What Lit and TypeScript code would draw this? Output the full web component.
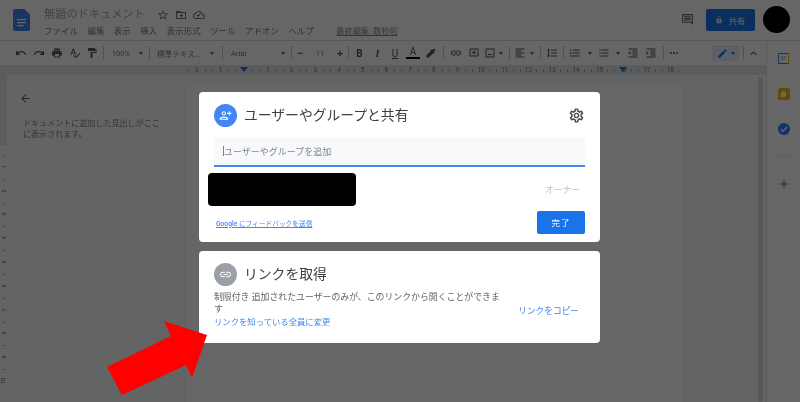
import { LitElement, css, html, svg } from 'lit'
import { customElement } from 'lit/decorators.js'

const P: Record<string, string> = {
  undo: 'M12.5 8c-2.65 0-5.05.99-6.9 2.6L2 7v9h9l-3.62-3.62c1.39-1.16 3.16-1.88 5.12-1.88 3.54 0 6.55 2.31 7.6 5.5l2.37-.78C21.08 11.03 17.15 8 12.5 8z',
  redo: 'M18.4 10.6C16.55 8.99 14.15 8 11.5 8c-4.65 0-8.58 3.03-9.96 7.22L3.9 16c1.05-3.19 4.05-5.5 7.6-5.5 1.95 0 3.73.72 5.12 1.88L13 16h9V7l-3.6 3.6z',
  print: 'M19 8H5c-1.66 0-3 1.34-3 3v6h4v4h12v-4h4v-6c0-1.66-1.34-3-3-3zm-3 11H8v-5h8v5zm3-7c-.55 0-1-.45-1-1s.45-1 1-1 1 .45 1 1-.45 1-1 1zm-1-9H6v4h12V3z',
  spell: 'M12.45 16h2.09L9.43 3H7.57L2.46 16h2.09l1.12-3h5.64l1.14 3zm-6.02-5L8.5 5.48 10.57 11H6.43zm15.16.59l-8.09 8.09L9.83 16l-1.41 1.41 5.09 5.09L23 13l-1.41-1.41z',
  paint: 'M18 4V3c0-.55-.45-1-1-1H5c-.55 0-1 .45-1 1v4c0 .55.45 1 1 1h12c.55 0 1-.45 1-1V6h1v4H9v11c0 .55.45 1 1 1h2c.55 0 1-.45 1-1v-9h8V4h-3z',
  hl: 'M20.71 5.63l-2.34-2.34a.996.996 0 0 0-1.41 0l-3.12 3.12-1.93-1.91-1.41 1.41 1.42 1.42L3 16.25V21h4.75l8.92-8.92 1.42 1.42 1.41-1.41-1.92-1.92 3.12-3.12c.4-.4.4-1.03.01-1.42z',
  link: 'M3.9 12c0-1.71 1.39-3.1 3.1-3.1h4V7H7c-2.76 0-5 2.24-5 5s2.24 5 5 5h4v-1.9H7c-1.71 0-3.1-1.39-3.1-3.1zM8 13h8v-2H8v2zm9-6h-4v1.9h4c1.71 0 3.1 1.39 3.1 3.1s-1.39 3.1-3.1 3.1h-4V17h4c2.76 0 5-2.24 5-5s-2.24-5-5-5z',
  cadd: 'M4 3h16a1 1 0 0 1 1 1v14a1 1 0 0 1-1 1H4a1 1 0 0 1-1-1V4a1 1 0 0 1 1-1zm1 2v12h14V5H5zm6 2h2v3h3v2h-3v3h-2v-3H8v-2h3V7z',
  image: 'M19 3H5a2 2 0 0 0-2 2v14a2 2 0 0 0 2 2h14a2 2 0 0 0 2-2V5a2 2 0 0 0-2-2zm0 16H5V5h14v14zm-3-5H8v2h8v-2z',
  align: 'M15 15H3v2h12v-2zm0-8H3v2h12V7zM3 13h18v-2H3v2zm0 8h18v-2H3v2zM3 3v2h18V3H3z',
  space: 'M6 7h2.5L5 3.5 1.5 7H4v10H1.5L5 20.5 8.5 17H6V7zm4-2v2h12V5H10zm0 14h12v-2H10v2zm0-6h12v-2H10v2z',
  num: 'M2 17h2v.5H3v1h1v.5H2v1h3v-4H2v1zm1-9h1V4H2v1h1v3zm-1 3h1.8L2 13.1v.9h3v-1H3.2L5 10.9V10H2v1zm5-6v2h14V5H7zm0 14h14v-2H7v2zm0-6h14v-2H7v2z',
  bullet: 'M4 10.5c-.83 0-1.5.67-1.5 1.5s.67 1.5 1.5 1.5 1.5-.67 1.5-1.5-.67-1.5-1.5-1.5zm0-6c-.83 0-1.5.67-1.5 1.5S3.17 7.5 4 7.5 5.5 6.83 5.5 6 4.83 4.5 4 4.5zm0 12c-.83 0-1.5.68-1.5 1.5s.68 1.5 1.5 1.5 1.5-.68 1.5-1.5-.67-1.5-1.5-1.5zM7 19h14v-2H7v2zm0-6h14v-2H7v2zm0-8v2h14V5H7z',
  dedent: 'M11 17h10v-2H11v2zm-8-5l4 4V8l-4 4zm0 9h18v-2H3v2zM3 3v2h18V3H3zm8 6h10V7H11v2zm0 4h10v-2H11v2z',
  indent: 'M3 21h18v-2H3v2zM3 8v8l4-4-4-4zm8 9h10v-2H11v2zM3 3v2h18V3H3zm8 6h10V7H11v2zm0 4h10v-2H11v2z',
  more: 'M6 10a2 2 0 1 0 0 4 2 2 0 0 0 0-4zm6 0a2 2 0 1 0 0 4 2 2 0 0 0 0-4zm6 0a2 2 0 1 0 0 4 2 2 0 0 0 0-4z',
  pencil: 'M3 17.25V21h3.75L17.81 9.94l-3.75-3.75L3 17.25zM20.71 7.04a.996.996 0 0 0 0-1.41l-2.34-2.34a.996.996 0 0 0-1.41 0l-1.83 1.83 3.75 3.75 1.83-1.83z',
  less: 'M12 8l-6 6 1.41 1.41L12 10.83l4.59 4.58L18 14z',
  star: 'M22 9.24l-7.19-.62L12 2 9.19 8.63 2 9.24l5.46 4.73L5.82 21 12 17.27 18.18 21l-1.63-7.03L22 9.24zM12 15.4l-3.76 2.27 1-4.28-3.32-2.88 4.38-.38L12 6.1l1.71 4.04 4.38.38-3.32 2.88 1 4.28L12 15.4z',
  folder: 'M20 6h-8l-2-2H4c-1.1 0-2 .9-2 2v12c0 1.1.9 2 2 2h16c1.1 0 2-.9 2-2V8c0-1.1-.9-2-2-2zm0 12H4V8h16v10zM12 9.5h2v2.5h2.5v2H14v2.5h-2V14H9.5v-2H12V9.5z',
  cloud: 'M19.35 10.04C18.67 6.59 15.64 4 12 4 9.11 4 6.6 5.64 5.35 8.04 2.34 8.36 0 10.91 0 14c0 3.31 2.69 6 6 6h13c2.76 0 5-2.24 5-5 0-2.64-2.05-4.78-4.65-4.96zM19 18H6c-2.21 0-4-1.79-4-4 0-2.05 1.53-3.76 3.56-3.97l1.07-.11.5-.95C8.08 7.14 9.94 6 12 6c2.62 0 4.88 1.86 5.39 4.43l.3 1.5 1.53.11c1.56.1 2.78 1.41 2.78 2.96 0 1.65-1.35 3-3 3zM10 13.2l-1.6-1.6L7 13l3 3 5.5-5.5-1.4-1.4L10 13.2z',
  comment: 'M21.99 4c0-1.1-.89-2-1.99-2H4c-1.1 0-2 .9-2 2v12c0 1.1.9 2 2 2h14l4 4-.01-18zM20 4v13.17L18.83 16H4V4h16zM6 12h12v2H6zm0-3h12v2H6zm0-3h12v2H6z',
  lock: 'M18 8h-1V6c0-2.76-2.24-5-5-5S7 3.24 7 6v2H6c-1.1 0-2 .9-2 2v10c0 1.1.9 2 2 2h12c1.1 0 2-.9 2-2V10c0-1.1-.9-2-2-2zm-6 9c-1.1 0-2-.9-2-2s.9-2 2-2 2 .9 2 2-.9 2-2 2zm3.1-9H8.9V6c0-1.71 1.39-3.1 3.1-3.1 1.71 0 3.1 1.39 3.1 3.1v2z',
  person: 'M9 12c2.21 0 4-1.79 4-4s-1.79-4-4-4-4 1.79-4 4 1.79 4 4 4zm0-6c1.1 0 2 .9 2 2s-.9 2-2 2-2-.9-2-2 .9-2 2-2zm0 8c-2.67 0-8 1.34-8 4v2h16v-2c0-2.66-5.33-4-8-4zm-6 4c.22-.72 3.31-2 6-2 2.7 0 5.8 1.29 6 2H3zm17-6v-3h3V7h-3V4h-2v3h-3v2h3v3h2z',
  gear: 'M19.43 12.98c.04-.32.07-.64.07-.98 0-.34-.03-.66-.07-.98l2.11-1.65c.19-.15.24-.42.12-.64l-2-3.46a.5.5 0 0 0-.61-.22l-2.49 1c-.52-.4-1.08-.73-1.69-.98l-.38-2.65A.488.488 0 0 0 14 2h-4c-.25 0-.46.18-.49.42l-.38 2.65c-.61.25-1.17.59-1.69.98l-2.49-1a.566.566 0 0 0-.18-.03c-.17 0-.34.09-.43.25l-2 3.46c-.13.22-.07.49.12.64l2.11 1.65c-.04.32-.07.65-.07.98 0 .33.03.66.07.98l-2.11 1.65c-.19.15-.24.42-.12.64l2 3.46a.5.5 0 0 0 .61.22l2.49-1c.52.4 1.08.73 1.69.98l.38 2.65c.03.24.24.42.49.42h4c.25 0 .46-.18.49-.42l.38-2.65c.61-.25 1.17-.59 1.69-.98l2.49 1c.06.02.12.03.18.03.17 0 .34-.09.43-.25l2-3.46c.12-.22.07-.49-.12-.64l-2.11-1.65zm-1.98-1.71c.04.31.05.52.05.73 0 .21-.02.43-.05.73l-.14 1.13.89.7 1.08.84-.7 1.21-1.27-.51-1.04-.42-.9.68c-.43.32-.84.56-1.25.73l-1.06.43-.16 1.13-.2 1.35h-1.4l-.19-1.35-.16-1.13-1.06-.43c-.43-.18-.83-.41-1.23-.71l-.91-.7-1.06.43-1.27.51-.7-1.21 1.08-.84.89-.7-.14-1.13c-.03-.31-.05-.54-.05-.74s.02-.43.05-.73l.14-1.13-.89-.7-1.08-.84.7-1.21 1.27.51 1.04.42.9-.68c.43-.32.84-.56 1.25-.73l1.06-.43.16-1.13.2-1.35h1.39l.19 1.35.16 1.13 1.06.43c.43.18.83.41 1.23.71l.91.7 1.06-.43 1.27-.51.7 1.21-1.07.85-.89.7.14 1.13zM12 8c-2.21 0-4 1.79-4 4s1.79 4 4 4 4-1.79 4-4-1.79-4-4-4zm0 6c-1.1 0-2-.9-2-2s.9-2 2-2 2 .9 2 2-.9 2-2 2z',
  back: 'M20 11H7.83l5.59-5.59L12 4l-8 8 8 8 1.41-1.41L7.83 13H20v-2z',
  add: 'M19 13h-6v6h-2v-6H5v-2h6V5h2v6h6v2z',
}

const icon = (name: string, size = 12) => html`
  <svg class="ic" width=${size} height=${size} viewBox="0 0 24 24">${svg`<path d=${P[name]}></path>`}</svg>
`

// [kind, width, value]: widths come from the toolbar's slot positions
type Slot = [string, number, string?]
const TOOLS: Slot[] = [
  ['i', 18, 'undo'], ['i', 18, 'redo'], ['i', 18, 'print'], ['i', 17, 'spell'], ['i', 17, 'paint'], ['s', 6],
  ['t', 30, '100%'], ['c', 10], ['s', 6],
  ['t', 54, '標準テキス...'], ['c', 12], ['s', 8],
  ['t', 52, 'Arial'], ['c', 10], ['s', 6],
  ['p', 12, '−'], ['t', 28, '11'], ['p', 12, '+'], ['s', 4],
  ['b', 19, 'B'], ['b', 17, 'I'], ['b', 18, 'U'], ['a', 18, 'A'], ['i', 18, 'hl'], ['s', 6],
  ['i', 19, 'link'], ['i', 17, 'cadd'], ['i', 15, 'image'], ['c', 8], ['s', 8],
  ['i', 14, 'align'], ['c', 9], ['s', 8],
  ['i', 16, 'space'], ['s', 6],
  ['i', 18, 'num'], ['c', 12], ['i', 16, 'bullet'], ['c', 12], ['i', 18, 'dedent'], ['i', 18, 'indent'], ['s', 6],
  ['i', 16, 'more'],
]
const MENU = ['ファイル', '編集', '表示', '挿入', '表示形式', 'ツール', 'アドオン', 'ヘルプ']
const TOP_RULER = ['2', '1', '', '1', '2', '3', '4', '5', '6', '7', '8', '9', '10', '11', '12', '13', '14', '15', '16', '17', '18']
const SIDE_RULER = ['1', '2', '3', '4', '5', '6', '7', '8', '9', '10']

@customElement('app-root')
export class AppRoot extends LitElement {
  static styles = css`
    :host {
      display: block;
      width: 800px;
      height: 402px;
      position: relative;
      overflow: hidden;
      font-family: Roboto, "Noto Sans CJK JP", sans-serif;
      color: #7c7f82;
      background: #fff;
    }
    .ic { fill: currentColor; display: block; flex: none; }
    .soft { filter: blur(0.55px); }
    .app { width: 800px; height: 402px; display: flex; flex-direction: column; }

    .head { height: 41px; flex: none; display: flex; align-items: flex-start; border-bottom: 1px solid #ddd; box-sizing: border-box; }
    .doc { width: 17px; height: 22px; margin: 9px 14px 0 13px; flex: none; color: #4285f4; }
    .titles { flex: 1; padding-top: 7px; }
    .title-row { display: flex; align-items: center; height: 15px; }
    .title { font-size: 11.2px; width: 113px; color: #a4a6a8; line-height: 15px; white-space: nowrap; }
    .title-row .ic { margin-right: 6px; color: #6d7074; }
    .menu { display: flex; gap: 9.4px; margin-top: 2px; font-size: 8.5px; line-height: 15px; color: #7a7d80; white-space: nowrap; }
    .saved { margin-left: 13px; text-decoration: underline; color: #85888b; font-size: 8.2px; }
    .head-right { display: flex; align-items: center; padding-top: 6px; height: 27px; }
    .comment { color: #5f6368; margin-right: 12px; }
    .share { width: 49px; height: 22px; border-radius: 2px; background: #1a73e8; color: #d5e2f5; font-size: 8.5px; font-weight: 500; display: flex; align-items: center; justify-content: center; gap: 5px; }
    .avatar { width: 27px; height: 27px; border-radius: 50%; background: #000; margin: 0 10px 0 8px; }

    .body { flex: 1; display: flex; min-height: 0; }
    .work { width: 766px; flex: none; display: flex; flex-direction: column; }
    .tools { height: 24px; flex: none; display: flex; align-items: center; padding-left: 12px; color: #5f6368; }
    .slot { display: flex; align-items: center; justify-content: center; flex: none; height: 24px; font-size: 7.6px; color: #777a7d; white-space: nowrap; }
    .slot .ic { color: #55585c; }
    .slot.font { justify-content: flex-start; padding-left: 5px; box-sizing: border-box; }
    .slot.pm { font-size: 11px; font-weight: 700; color: #5f6368; }
    .slot.bold { font-size: 10px; font-weight: 700; color: #55585b; }
    .slot.em { font-style: italic; font-family: "Liberation Serif", serif; }
    .slot.under { text-decoration: underline; font-weight: 400; }
    .slot.ink { flex-direction: column; font-size: 10px; line-height: 10px; color: #55585b; }
    .ink i { display: block; width: 14px; height: 2px; background: #000; }
    .caret { width: 0; height: 0; border: 2.5px solid transparent; border-top: 3px solid #5f6368; border-bottom: 0; }
    .sep { width: 1px; height: 14px; background: #c8cacc; }
    .tools-end { margin-left: auto; display: flex; align-items: center; padding-right: 6px; }
    .mode { width: 27px; height: 16px; border-radius: 2px; background: #e8f0fe; color: #1a73e8; display: flex; align-items: center; justify-content: center; gap: 3px; }
    .mode .caret { border-top-color: #1a73e8; }
    .tools-end .sep { margin: 0 3px 0 4px; }

    .ruler { height: 10px; flex: none; display: flex; padding-left: 185px; background: #e3e5e8; font-size: 6.5px; color: #777; }
    .cell { width: 23.7px; flex: none; display: flex; align-items: center; justify-content: space-between; box-sizing: border-box; padding: 0 3px; position: relative; }
    .cell span { line-height: 10px; }
    .cell i { width: 1px; height: 3px; background: #aaa; }
    .marker { position: absolute; left: 8px; top: 2px; border: 4px solid transparent; border-top: 5px solid #1a73e8; border-bottom: 0; }

    .main { flex: 1; display: flex; min-height: 0; background: #f8f9fa; }
    .side-ruler { width: 7px; flex: none; display: flex; flex-direction: column; }
    .side-top { height: 70px; flex: none; background: #e3e5e8; }
    .side-rest { flex: 1; padding-top: 10px; background: #fafafa; font-size: 5.5px; color: #555; }
    .side-rest div { height: 23.8px; display: flex; align-items: center; justify-content: center; background: linear-gradient(#bbb, #bbb) center top / 3px 1px no-repeat; }
    .side-rest span { transform: rotate(-90deg); }
    .outline { width: 179px; flex: none; box-sizing: border-box; padding: 17px 0 0 12px; color: #5f6368; }
    .outline p { margin: 13px 0 0 4px; font-size: 8.05px; line-height: 11px; color: #80868b; width: 142px; }
    .page { width: 497px; flex: none; margin-top: 9px; background: #fff; box-shadow: 0 0 1px #bbb; }
    .gutter { flex: 1; display: flex; justify-content: flex-end; }
    .scroll { width: 5px; margin: 2px 3px 0 0; background: #dadce0; border-radius: 2px; }

    .rail { flex: 1; border-left: 1px solid #e0e0e0; display: flex; flex-direction: column; align-items: center; padding-top: 12px; box-sizing: border-box; background: #fff; }
    .cal { width: 11px; height: 11px; border: 1.5px solid #4285f4; border-right-color: #fbbc04; border-bottom-color: #34a853; border-radius: 1px; box-sizing: border-box; font-size: 4.5px; color: #4285f4; display: flex; align-items: center; justify-content: center; }
    .keep { width: 12px; height: 12px; margin-top: 24px; background: #fbbc04; border-radius: 1.5px; display: flex; align-items: center; justify-content: center; }
    .keep i { width: 5px; height: 6px; background: #fff; border-radius: 3px 3px 1px 1px; }
    .task { width: 12px; height: 12px; margin-top: 23px; border-radius: 50%; background: #2684fc; color: #fff; display: flex; align-items: center; justify-content: center; }
    .rail hr { width: 13px; border: 0; border-top: 1px solid #e6e6e6; margin: 21px 0 0; }
    .rail .plus { margin-top: 21px; color: #5f6368; }

    .scrim { position: absolute; inset: 0; background: rgba(0, 0, 0, 0.6); box-sizing: border-box; padding: 92px 0 0 199px; display: flex; flex-direction: column; gap: 9px; }
    .card { width: 401px; background: #fff; border-radius: 4px; box-sizing: border-box; position: relative; color: #3c4043; }
    .card.share-card { height: 150px; padding: 12px 15px 0; }
    .card.link-card { height: 92px; padding: 12px 15px 0; }
    .card-head { display: flex; align-items: center; gap: 7px; height: 23px; }
    .badge { width: 23px; height: 23px; border-radius: 50%; background: #4285f4; color: #fff; display: flex; align-items: center; justify-content: center; flex: none; }
    .badge.grey { background: #9aa0a6; }
    .card-head h2 { margin: 0; font-size: 13.8px; font-weight: 400; line-height: 23px; color: #3c4043; white-space: nowrap; flex: 1; }
    .card-head > .ic { color: #444649; }
    .field { height: 30px; margin-top: 10px; background: #f8f9fa; border-bottom: 2px solid #4285f4; border-radius: 3px 3px 0 0; box-sizing: border-box; display: flex; align-items: center; padding-left: 9px; font-size: 9px; color: #80868b; white-space: nowrap; }
    .field i { width: 1px; height: 10px; background: #4285f4; flex: none; }
    .person { display: flex; align-items: center; justify-content: space-between; height: 33px; margin: 6px 5px 0 -6px; }
    .masked { width: 148px; height: 33px; background: #000; border-radius: 4px; }
    .owner { font-size: 8.75px; color: #bdc1c6; }
    .foot { display: flex; align-items: center; justify-content: space-between; margin-top: 5px; padding-left: 2px; }
    .feedback { font-size: 6.7px; color: #4285f4; text-decoration: underline; white-space: nowrap; }
    .feedback b { font-weight: 500; }
    .done { width: 48px; height: 23px; border-radius: 2px; background: #1a73e8; color: #fff; font-size: 8.5px; display: flex; align-items: center; justify-content: center; letter-spacing: 1px; box-sizing: border-box; padding-bottom: 2px; }
    .link-row { display: flex; align-items: center; justify-content: space-between; margin-top: 5px; }
    .desc { width: 290px; font-size: 8.9px; line-height: 12px; color: #5f6368; }
    .desc a { display: block; font-size: 8.36px; line-height: 15px; color: #4285f4; white-space: nowrap; }
    .copy { font-size: 8.7px; color: #4285f4; margin-right: 6px; white-space: nowrap; }

    .arrow { position: absolute; left: 0; top: 0; pointer-events: none; }
  `

  renderSlot ([kind, width, value]: Slot) {
    const w = `width:${width}px`
    if (kind === 'i') return html`<div class="slot" style=${w}>${icon(value!, 12)}</div>`
    if (kind === 'c') return html`<div class="slot" style=${w}><div class="caret"></div></div>`
    if (kind === 's') return html`<div class="slot" style=${w}><div class="sep"></div></div>`
    if (kind === 'a') return html`<div class="slot ink" style=${w}>${value}<i></i></div>`
    if (kind === 'p') return html`<div class="slot pm" style=${w}>${value}</div>`
    if (kind === 'b') {
      const extra = value === 'I' ? 'em' : value === 'U' ? 'under' : ''
      return html`<div class="slot bold ${extra}" style=${w}>${value}</div>`
    }
    return html`<div class="slot ${width > 40 ? 'font' : ''}" style=${w}>${value}</div>`
  }

  renderHead () {
    return html`
      <div class="head">
        <svg class="doc" viewBox="0 0 17 22">
          <path fill="currentColor" d="M2 0h9.5L17 5.5V20a2 2 0 0 1-2 2H2a2 2 0 0 1-2-2V2a2 2 0 0 1 2-2z"></path>
          <path fill="#fff" d="M4 10h9v1.2H4zM4 13h9v1.2H4zM4 16h6.5v1.2H4z"></path>
        </svg>
        <div class="titles">
          <div class="title-row">
            <div class="title">無題のドキュメント</div>
            ${icon('star', 12)}${icon('folder', 12)}${icon('cloud', 12)}
          </div>
          <div class="menu">
            ${MENU.map((m) => html`<span>${m}</span>`)}
            <span class="saved">最終編集: 数秒前</span>
          </div>
        </div>
        <div class="head-right">
          <div class="comment">${icon('comment', 13)}</div>
          <div class="share">${icon('lock', 8)}共有</div>
          <div class="avatar"></div>
        </div>
      </div>
    `
  }

  renderRuler () {
    return html`
      <div class="ruler">
        ${TOP_RULER.map((n, i) => html`
          <div class="cell">
            <i></i><span>${n}</span><i></i>
            ${i === 2 || i === 18 ? html`<div class="marker"></div>` : ''}
          </div>
        `)}
      </div>
    `
  }

  renderWork () {
    return html`
      <div class="work">
        <div class="tools">
          ${TOOLS.map((t) => this.renderSlot(t))}
          <div class="tools-end">
            <div class="mode">${icon('pencil', 11)}<div class="caret"></div></div>
            <div class="sep"></div>
            ${icon('less', 13)}
          </div>
        </div>
        ${this.renderRuler()}
        <div class="main">
          <div class="side-ruler">
            <div class="side-top"></div>
            <div class="side-rest">
              ${SIDE_RULER.map((n) => html`<div><span>${n}</span></div>`)}
            </div>
          </div>
          <div class="outline">
            ${icon('back', 13)}
            <p>ドキュメントに追加した見出しがここに表示されます。</p>
          </div>
          <div class="page"></div>
          <div class="gutter"><div class="scroll"></div></div>
        </div>
      </div>
    `
  }

  renderRail () {
    return html`
      <div class="rail">
        <div class="cal">31</div>
        <div class="keep"><i></i></div>
        <div class="task">
          <svg width="8" height="8" viewBox="0 0 8 8"><path d="M1 4.2l2 2L7 2" fill="none" stroke="currentColor" stroke-width="1.4"></path></svg>
        </div>
        <hr />
        <div class="plus">${icon('add', 12)}</div>
      </div>
    `
  }

  renderDialogs () {
    return html`
      <div class="scrim">
        <div class="card share-card soft">
          <div class="card-head">
            <div class="badge">${icon('person', 13)}</div>
            <h2>ユーザーやグループと共有</h2>
            ${icon('gear', 17)}
          </div>
          <div class="field"><i></i>ユーザーやグループを追加</div>
          <div class="person">
            <div class="masked"></div>
            <div class="owner">オーナー</div>
          </div>
          <div class="foot">
            <div class="feedback"><b>Google</b> にフィードバックを送信</div>
            <div class="done">完了</div>
          </div>
        </div>
        <div class="card link-card soft">
          <div class="card-head">
            <div class="badge grey">${icon('link', 13)}</div>
            <h2>リンクを取得</h2>
          </div>
          <div class="link-row">
            <div class="desc">
              制限付き 追加されたユーザーのみが、このリンクから開くことができます
              <a>リンクを知っている全員に変更</a>
            </div>
            <div class="copy">リンクをコピー</div>
          </div>
        </div>
      </div>
    `
  }

  render () {
    return html`
      <div class="app soft">
        ${this.renderHead()}
        <div class="body">
          ${this.renderWork()}
          ${this.renderRail()}
        </div>
      </div>
      ${this.renderDialogs()}
      <svg class="arrow" width="800" height="402" viewBox="0 0 800 402">
        <polygon fill="#ff0000" points="107,367 171,336 164,321 207,335 192,378 186,365 122,395"></polygon>
      </svg>
    `
  }
}
